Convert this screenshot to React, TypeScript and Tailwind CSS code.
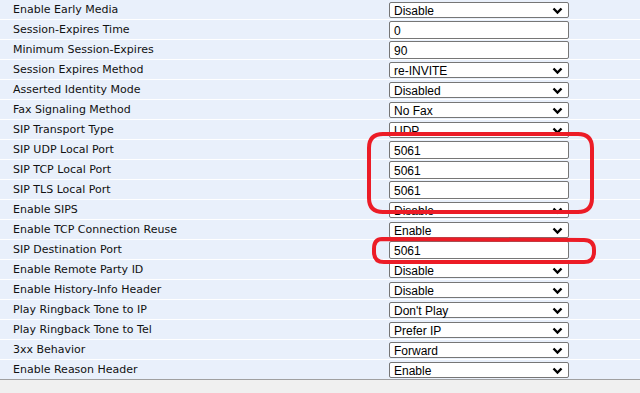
type Row = { label: string; kind: "select" | "input"; value: string };

const rows: Row[] = [
  { label: "Enable Early Media", kind: "select", value: "Disable" },
  { label: "Session-Expires Time", kind: "input", value: "0" },
  { label: "Minimum Session-Expires", kind: "input", value: "90" },
  { label: "Session Expires Method", kind: "select", value: "re-INVITE" },
  { label: "Asserted Identity Mode", kind: "select", value: "Disabled" },
  { label: "Fax Signaling Method", kind: "select", value: "No Fax" },
  { label: "SIP Transport Type", kind: "select", value: "UDP" },
  { label: "SIP UDP Local Port", kind: "input", value: "5061" },
  { label: "SIP TCP Local Port", kind: "input", value: "5061" },
  { label: "SIP TLS Local Port", kind: "input", value: "5061" },
  { label: "Enable SIPS", kind: "select", value: "Disable" },
  { label: "Enable TCP Connection Reuse", kind: "select", value: "Enable" },
  { label: "SIP Destination Port", kind: "input", value: "5061" },
  { label: "Enable Remote Party ID", kind: "select", value: "Disable" },
  { label: "Enable History-Info Header", kind: "select", value: "Disable" },
  { label: "Play Ringback Tone to IP", kind: "select", value: "Don't Play" },
  { label: "Play Ringback Tone to Tel", kind: "select", value: "Prefer IP" },
  { label: "3xx Behavior", kind: "select", value: "Forward" },
  { label: "Enable Reason Header", kind: "select", value: "Enable" },
];

function Chevron() {
  return (
    <svg width="11" height="8" viewBox="0 0 11 8" className="shrink-0">
      <polyline points="1.5,1.5 5.5,5.5 9.5,1.5" fill="none" stroke="#000" strokeWidth="2.4" />
    </svg>
  );
}

function Control({ row }: { row: Row }) {
  if (row.kind === "select") {
    return (
      <div className="mt-[1px] flex h-[16px] w-[180px] items-center justify-between rounded-[2px] border border-[#767676] bg-white pl-[4px] pr-[5px] pt-[1px] text-[12px] leading-none text-black [font-family:'Liberation_Sans',Arial,sans-serif]">
        <span>{row.value}</span>
        <Chevron />
      </div>
    );
  }
  return (
    <div className="mt-[1px] flex h-[18px] w-[180px] items-center rounded-[2px] border border-[#767676] bg-white pl-[4px] pt-[1px] text-[12px] leading-none text-black [font-family:'Liberation_Sans',Arial,sans-serif]">
      {row.value}
    </div>
  );
}

export default function App() {
  return (
    <div className="relative h-[393px] w-[640px] overflow-hidden bg-[#f0f0f0]">
      <div className="flex flex-col">
        {rows.map((r, i) => (
          <div
            key={r.label}
            className={
              i === rows.length - 1
                ? "flex h-[20px] items-center border-b border-[#a0a0a0] bg-[#e9f0fb]"
                : "flex h-[20px] items-center border-b border-white bg-[#e9f0fb]"
            }
          >
            <div className="w-[389px] pl-[13px] pt-[2px] text-[11px] text-[#111] [font-family:'DejaVu_Sans',Verdana,sans-serif]">
              {r.label}
            </div>
            <Control row={r} />
          </div>
        ))}
      </div>

      {/* red annotation marks */}
      <svg className="pointer-events-none absolute left-0 top-0" width="640" height="393">
        <path
          d="M383 134 L578 134 Q592 134 592 148 L592 198 Q592 212 578 212 L383 212 Q369 212 369 198 L369 148 Q369 134 383 134 Z"
          fill="none"
          stroke="#ec1c26"
          strokeWidth="4"
        />
        <path
          d="M382 239 L584 240 Q594 240 594 250 L594 252 Q594 262 584 262 L384 262 Q374 262 374 252 L374 249 Q374 239 382 239 Z"
          fill="none"
          stroke="#ec1c26"
          strokeWidth="4"
        />
      </svg>
    </div>
  );
}
